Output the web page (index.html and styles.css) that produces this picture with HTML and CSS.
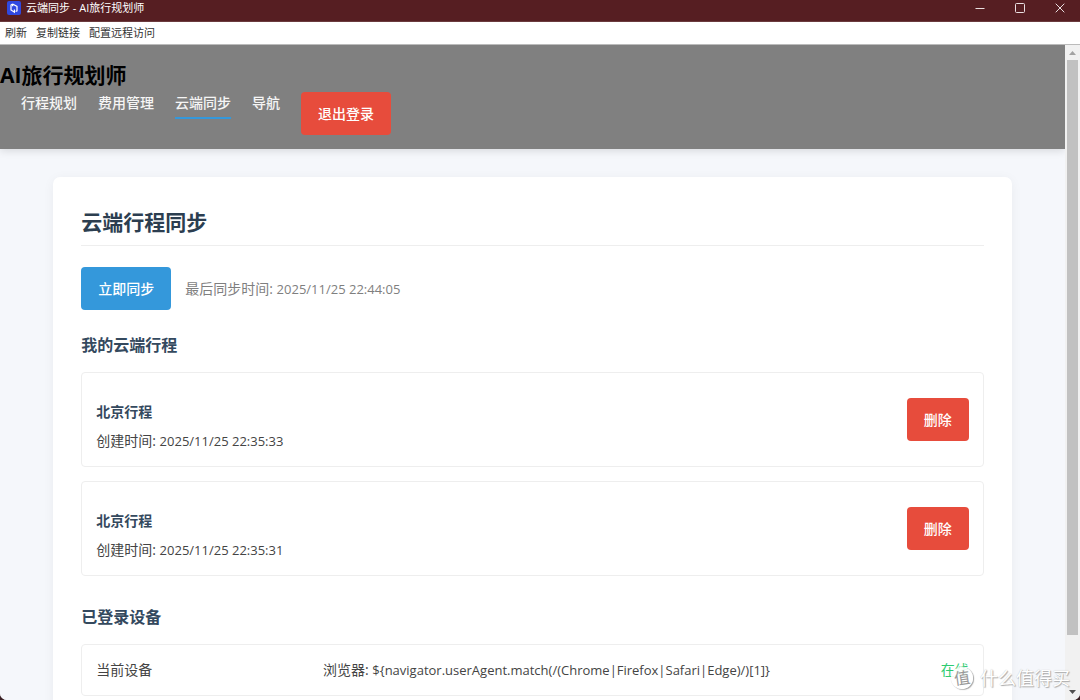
FILE: index.html
```html
<!DOCTYPE html>
<html lang="zh-CN">
<head>
    <meta charset="UTF-8">
    <meta name="viewport" content="width=device-width, initial-scale=1.0">
    <title>云端同步 - AI旅行规划师</title>
    <link rel="stylesheet" href="styles.css">
</head>
<body>
    <div class="window">
        <!-- 标题栏 -->
        <div class="titlebar">
            <svg class="app-icon" width="14" height="14" viewBox="0 0 14 14">
                <rect width="14" height="14" rx="2" fill="#3048e0"/>
                <path d="M5.6 3L4 4v5l3.4 2.2V8.6M5.6 3L10 5.4v4.4L8.6 10.6M5.6 3v2.2" fill="none" stroke="#fff" stroke-width="1.2"/>
            </svg>
            <span class="window-title">云端同步 - AI旅行规划师</span>
            <button class="win-btn" aria-label="最小化">
                <svg width="10" height="10" viewBox="0 0 10 10"><path d="M.5 5.5h9"/></svg>
            </button>
            <button class="win-btn" aria-label="最大化">
                <svg width="10" height="10" viewBox="0 0 10 10"><rect x=".5" y=".5" width="9" height="9" rx="1"/></svg>
            </button>
            <button class="win-btn" aria-label="关闭">
                <svg width="10" height="10" viewBox="0 0 10 10"><path d="M.7 .7l8.6 8.6M9.3 .7L.7 9.3"/></svg>
            </button>
        </div>

        <div class="menubar">
            <button>刷新</button>
            <button>复制链接</button>
            <button>配置远程访问</button>
        </div>

        <div class="viewport">
            <div class="page">
                <header class="header">
                    <h1>AI旅行规划师</h1>
                    <nav>
                        <a href="#plan">行程规划</a>
                        <a href="#cost">费用管理</a>
                        <a href="#sync" class="active">云端同步</a>
                        <a href="#map">导航</a>
                        <button class="btn btn-danger">退出登录</button>
                    </nav>
                </header>

                <main class="container">
                    <h2>云端行程同步</h2>
                    <div class="sync-bar">
                        <button class="btn btn-primary">立即同步</button>
                        <span class="sync-time">最后同步时间: <span class="latin">2025/11/25 22:44:05</span></span>
                    </div>

                    <!-- 行程列表 -->
                    <section>
                        <h3>我的云端行程</h3>
                        <div class="item">
                            <div>
                                <h4>北京行程</h4>
                                <p>创建时间: <span class="latin">2025/11/25 22:35:33</span></p>
                            </div>
                            <button class="btn btn-danger">删除</button>
                        </div>
                        <div class="item">
                            <div>
                                <h4>北京行程</h4>
                                <p>创建时间: <span class="latin">2025/11/25 22:35:31</span></p>
                            </div>
                            <button class="btn btn-danger">删除</button>
                        </div>
                    </section>

                    <!-- 设备列表 -->
                    <section class="devices">
                        <h3>已登录设备</h3>
                        <div class="item">
                            <span>当前设备</span>
                            <span>浏览器: <span class="latin">${navigator.userAgent.match(/(Chrome|Firefox|Safari|Edge)/)[1]}</span></span>
                            <span class="online">在线</span>
                        </div>
                    </section>
                </main>
            </div>

            <div class="scrollbar">
                <svg width="15" height="15" viewBox="0 0 15 15"><path d="M4 10l3.5-4 3.5 4z" fill="#a3a3a3"/></svg>
                <div class="track"><div class="thumb"></div></div>
                <svg width="15" height="15" viewBox="0 0 15 15"><path d="M4 5l3.5 4L11 5z" fill="#505050"/></svg>
            </div>
        </div>

        <div class="watermark">
            <span class="mark">值</span>
            <span>什么值得买</span>
        </div>
    </div>
</body>
</html>
```
FILE: styles.css
```css
* {
    margin: 0;
    padding: 0;
    box-sizing: border-box;
}
body {
    font-family: "Open Sans", "Noto Sans CJK SC", sans-serif;
    font-size: 14px;
    line-height: 22px;
    color: #444;
    background-color: #3a2024;
}
button {
    font-family: inherit;
    border: none;
    cursor: pointer;
}
.window {
    position: relative;
    display: flex;
    flex-direction: column;
    height: 100vh;
    border-radius: 0 0 7px 7px;
    overflow: hidden;
    background-color: #f5f7fa;
}

/* 标题栏 */
.titlebar {
    display: flex;
    flex: none;
    align-items: center;
    height: 22px;
    padding: 0 0 5px 7px;
    background-color: #561e22;
    border-bottom: 1px solid #6b3b3e;
    color: #fff;
    font-size: 11px;
}
.window-title {
    flex: 1;
    margin-left: 5px;
    line-height: 16px;
}
.win-btn {
    display: flex;
    align-items: center;
    justify-content: center;
    width: 40px;
    height: 16px;
    background: none;
}
.win-btn svg {
    fill: none;
    stroke: #eadfe0;
}
.menubar {
    display: flex;
    flex: none;
    gap: 9px;
    height: 23px;
    padding-left: 5px;
    background-color: #fff;
    border-bottom: 1px solid #bbb;
}
.menubar button {
    background: none;
    color: #333;
    font-size: 11px;
    line-height: 22px;
}

.viewport {
    display: flex;
    flex: 1;
    min-height: 0;
}
.page {
    flex: 1;
    overflow: hidden;
    background-color: #f5f7fb;
}

.header {
    padding: 13px 0 14px;
    background-color: #808080;
    box-shadow: 0 2px 8px rgba(0, 0, 0, 0.12);
}
.header h1 {
    color: #000;
    font-size: 21px;
    line-height: 34px;
}
.header nav {
    display: flex;
    align-items: flex-start;
    gap: 21px;
    padding-left: 21px;
}
.header a {
    padding-bottom: 3px;
    color: #f5f5f5;
    font-weight: 500;
    text-decoration: none;
}
.header a.active {
    border-bottom: 2px solid #3498db;
}

.btn {
    padding: 11px 17px;
    border-radius: 4px;
    color: #fff;
    font-size: 14px;
    font-weight: 500;
    line-height: 21px;
}
.btn-primary {
    background-color: #3498db;
}
.btn-danger {
    background-color: #e74c3c;
}

.container {
    width: 90%;
    margin: 28px auto;
    padding: 28px;
    background-color: #fff;
    border-radius: 7px;
    box-shadow: 0 2px 12px rgba(0, 0, 0, 0.05);
}
.container h2 {
    padding-bottom: 6px;
    margin-bottom: 21px;
    border-bottom: 1px solid #eee;
    color: #2c3e50;
    font-size: 21px;
    line-height: 34px;
}
.container h3 {
    margin-bottom: 14px;
    color: #34495e;
    font-size: 16px;
    line-height: 26px;
}
.sync-bar {
    display: flex;
    align-items: center;
    gap: 14px;
    margin-bottom: 22px;
}
.sync-time {
    color: #7f7f7f;
}
.latin {
    font-size: 13px;
}
.item {
    display: flex;
    justify-content: space-between;
    align-items: center;
    padding: 14px;
    margin-bottom: 14px;
    border: 1px solid #eee;
    border-radius: 4px;
}
.item h4 {
    margin: 14px 0 7px;
    color: #34495e;
    font-size: 14px;
}
.devices {
    margin-top: 28px;
}
.online {
    color: #2ecc71;
}

/* 滚动条 */
.scrollbar {
    display: flex;
    flex: none;
    flex-direction: column;
    width: 15px;
    background-color: #f1f1f1;
}
.track {
    flex: 1;
    padding: 0 2px;
}
.thumb {
    height: 92%;
    background-color: #c1c1c1;
}

.watermark {
    position: absolute;
    right: 10px;
    bottom: 11px;
    display: flex;
    align-items: center;
    gap: 7px;
    color: #fff;
    font-size: 18px;
    line-height: 22px;
    text-shadow: 1px 1px 1px #aaa, 0 0 1px #bbb;
}
.mark {
    width: 22px;
    height: 22px;
    border-radius: 50%;
    background-color: rgba(255, 255, 255, 0.9);
    box-shadow: 1px 1px 1px #aaa, 0 0 1px #ccc;
    color: #999;
    font-size: 16px;
    text-align: center;
    text-shadow: none;
    transform: rotate(-8deg);
}
```
